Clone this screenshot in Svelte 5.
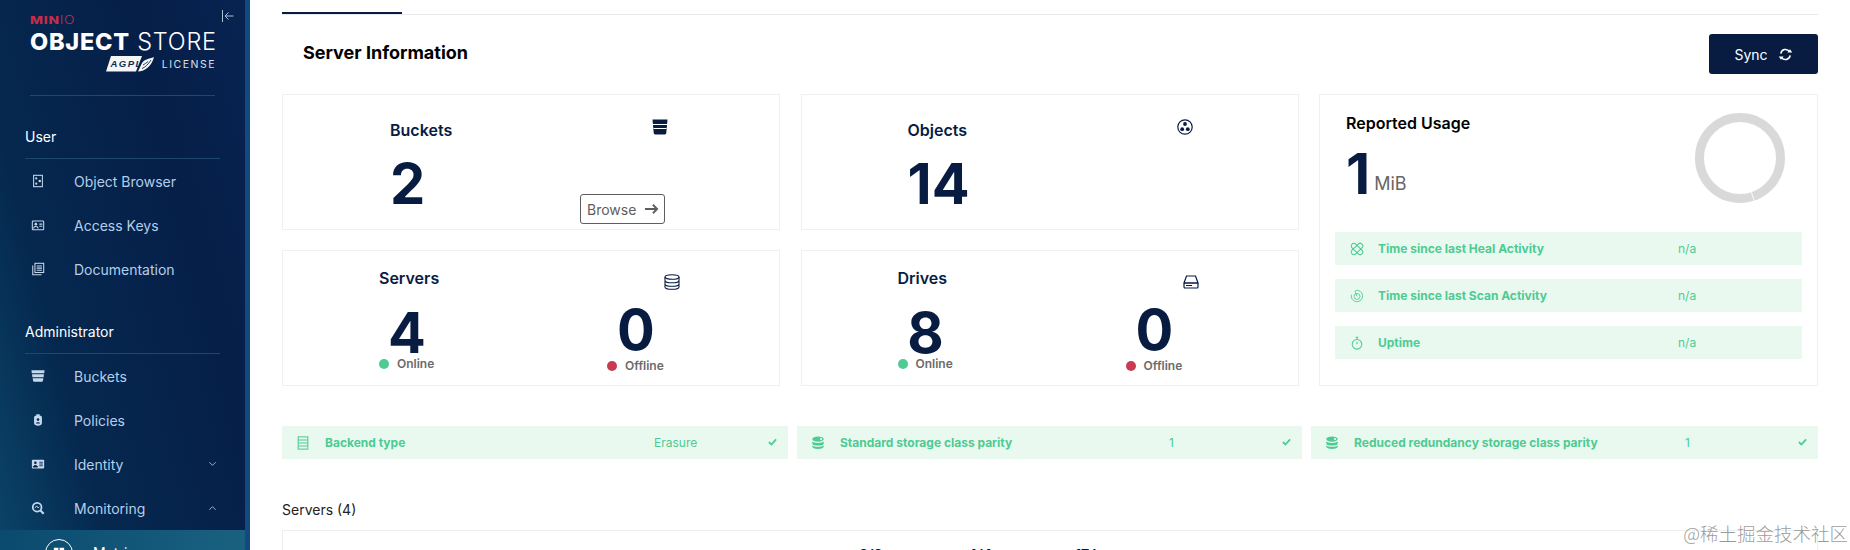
<script>
	const userLinks = [
		{ label: 'Object Browser', icon: 'browser' },
		{ label: 'Access Keys', icon: 'keys' },
		{ label: 'Documentation', icon: 'docs' }
	];
	const adminLinks = [
		{ label: 'Buckets', icon: 'bucket' },
		{ label: 'Policies', icon: 'policy' },
		{ label: 'Identity', icon: 'identity', caret: 'down' },
		{ label: 'Monitoring', icon: 'monitor', caret: 'up' }
	];
	const usageRows = [
		{ label: 'Time since last Heal Activity', icon: 'heal' },
		{ label: 'Time since last Scan Activity', icon: 'scan' },
		{ label: 'Uptime', icon: 'timer' }
	];
	const statusRows = [
		{ label: 'Backend type', value: 'Erasure', icon: 'rows', valueWidth: 372 },
		{ label: 'Standard storage class parity', value: '1', icon: 'db', valueWidth: 372 },
		{ label: 'Reduced redundancy storage class parity', value: '1', icon: 'db', valueWidth: 374 }
	];
</script>

{#snippet navIcon(name)}
	<svg class="nav-icon" viewBox="0 0 16 16" fill="none" stroke="currentColor" stroke-width="1.2">
		{#if name === 'browser'}
			<rect x="3" y="1.5" width="10" height="13" />
			<circle cx="6" cy="5" r="1.2" fill="currentColor" stroke="none" />
			<circle cx="10" cy="8" r="1.4" fill="currentColor" stroke="none" />
			<circle cx="6" cy="11" r="1.2" fill="currentColor" stroke="none" />
		{:else if name === 'keys'}
			<rect x="1.5" y="3.5" width="13" height="10" rx="1" />
			<circle cx="5.5" cy="7" r="1.5" fill="currentColor" stroke="none" />
			<path d="M3 12c0-3 5-3 5 0M9.5 7h3.5M9.5 9.5h3.5" />
		{:else if name === 'docs'}
			<path d="M2 4v10.5h10" />
			<rect x="4.5" y="1.5" width="10" height="10.5" />
			<path d="M6.5 4.5h6M6.5 7h6M6.5 9.5h6" />
		{:else if name === 'bucket'}
			<path d="M.5 1.500h15l-.4 3.300H.9zM1.200 6h13.600l-.4 3.300H1.600zM1.900 10.500h12.200l-.5 3c-.1.600-.5 1-1 1H3.400c-.5 0-.9-.4-1-1z" fill="currentColor" stroke="none" />
		{:else if name === 'policy'}
			<path d="M6 1.500h4v2H6z" fill="currentColor" stroke="none" />
			<path d="M3.500 5c0-1 1-1.800 2-1.800h5c1 0 2 .8 2 1.800v6.500c0 2-2 3-4.500 3s-4.500-1-4.500-3z" fill="currentColor" stroke="none" />
			<circle cx="8" cy="7.500" r="1.500" fill="#062650" stroke="none" />
			<path d="M5.500 12c.3-2 4.700-2 5 0z" fill="#062650" stroke="none" />
		{:else if name === 'identity'}
			<rect x="1" y="3" width="14" height="10" rx="1" fill="currentColor" stroke="none" />
			<circle cx="5" cy="6.500" r="1.500" fill="#062650" stroke="none" />
			<path d="M2.500 11.500c.3-2.500 4.700-2.500 5 0zM9.500 6h4M9.500 8h4M9.500 10h4" stroke="#062650" fill="#062650" stroke-width="1" />
		{:else}
			<circle cx="7" cy="7" r="5" stroke-width="2" />
			<path d="M10.500 10.500 14.500 14.500" stroke-width="2.400" />
			<path d="M4.500 8 6.500 5.500 8 8 9.500 6.500" stroke-width="1" />
		{/if}
	</svg>
{/snippet}

{#snippet greenIcon(name)}
	<svg class="green-icon" viewBox="0 0 16 16" fill="none" stroke="currentColor" stroke-width="1.2">
		{#if name === 'heal'}
			<rect x="0" y="5" width="16" height="6" rx="3" transform="rotate(45 8 8)" />
			<rect x="0" y="5" width="16" height="6" rx="3" transform="rotate(-45 8 8)" />
		{:else if name === 'scan'}
			<path d="M6 1.800a6.500 6.500 0 1 1-4.400 4.600" stroke-width="1" />
			<circle cx="8" cy="8.500" r="3.400" stroke-width="1" />
			<path d="M5.600 2.500 8 8.500" stroke-width="1" />
		{:else if name === 'timer'}
			<circle cx="8" cy="9.500" r="5.500" />
			<path d="M6.500 1.500h3M8 1.500v2.500M8 9.500V6.500" />
		{:else if name === 'rows'}
			<rect x="2.500" y="1" width="11" height="14" />
			<path d="M2.500 4.500h11M2.500 8h11M2.500 11.500h11" />
		{:else}
			<ellipse cx="8" cy="3.500" rx="6.500" ry="3" fill="currentColor" stroke="none" />
			<path d="M1.500 6c1 2.500 12 2.500 13 0v3c-1 2.500-12 2.500-13 0zM1.500 10.500c1 2.500 12 2.500 13 0v2c-1 3-12 3-13 0z" fill="currentColor" stroke="none" />
			<circle cx="11.500" cy="3.500" r="1.300" fill="#e9f8ee" stroke="none" />
		{/if}
	</svg>
{/snippet}

<div class="page">
	<aside class="sidebar">
		<div class="side-inner">
			<div class="logo">
				<svg class="collapse" viewBox="0 0 14 14" fill="none" stroke="currentColor" stroke-width="1">
					<path d="M1.500 1v12M12.500 7H4M7.500 3.500 4 7l3.500 3.500" />
				</svg>
				<div class="logo-minio"><b>MIN</b><span>IO</span></div>
				<div class="logo-name"><b>OBJECT</b> <span>STORE</span></div>
				<div class="logo-license">
					<svg class="agpl" viewBox="0 0 48 16">
						<path d="M5 0h31l-6 15.500H0z" fill="#f4f6f8" />
						<text x="4.500" y="10.500" class="agpl-text">AGPL</text>
						<path d="M32 15.500C38 15.500 45.500 11 48 1 43 3 38 3 35.500 8z" fill="#f4f6f8" />
						<path d="M36 12.500c3-1 6-4 9-8.500M37 9c2-1 3-2 5-3.500" stroke="#0a2a52" stroke-width=".9" fill="none" />
					</svg>
					<span>LICENSE</span>
				</div>
			</div>

			<nav class="nav">
				<div class="section user">
					<h3>User</h3>
					{#each userLinks as link}
						<a class="nav-link" href="#top">
							{@render navIcon(link.icon)}
							<span>{link.label}</span>
						</a>
					{/each}
				</div>
				<div class="section admin">
					<h3>Administrator</h3>
					{#each adminLinks as link}
						<a class="nav-link" href="#top">
							{@render navIcon(link.icon)}
							<span>{link.label}</span>
							{#if link.caret}
								<svg class="caret" class:up={link.caret === 'up'} viewBox="0 0 10 6" fill="none" stroke="currentColor" stroke-width="1">
									<path d="M1.500 1 5 4.500 8.500 1" />
								</svg>
							{/if}
						</a>
					{/each}
				</div>
			</nav>
		</div>
		<div class="sub-menu">
			<span class="sub-circle">
				<svg viewBox="0 0 14 14" fill="#fff"><path d="M1 1h5.300v5.300H1zM7.700 1H13v5.300H7.700zM1 7.700h5.300V13H1zM7.700 7.700H13V13H7.700z" /></svg>
			</span>
			<span class="sub-label">Metrics</span>
		</div>
	</aside>

	<main class="main">
		<div class="tabs"><span class="tab-active"></span></div>

		<header class="head">
			<h1>Server Information</h1>
			<button class="sync">
				Sync
				<svg viewBox="0 0 16 16" fill="none" stroke="currentColor" stroke-width="1.600">
					<path d="M3 7a5 5 0 0 1 9.200-2M13 9a5 5 0 0 1-9.200 2" />
					<path d="M10 5.800h5.200L12.800 2.500zM6 10.200H.8L3.200 13.500z" fill="currentColor" stroke="none" />
				</svg>
			</button>
		</header>

		<section class="tiles">
			<div class="tile tile-a">
				<div class="col col-left">
					<div class="tile-title">Buckets</div>
					<div class="big">2</div>
				</div>
				<div class="col col-right">
					<svg class="tile-icon" viewBox="0 0 16 16">
						<path d="M.5 .5h15l-1.200 13.200c-.1 1-.8 1.800-1.800 1.800h-9c-1 0-1.700-.8-1.800-1.800z" fill="#081c42" />
						<path d="M1 5.500h14M1.500 9.500h13" stroke="#fff" stroke-width="1.200" />
					</svg>
					<button class="browse">Browse
						<svg viewBox="0 0 16 12" fill="none" stroke="currentColor" stroke-width="2"><path d="M1 6h13M9.500 1.500 14 6l-4.500 4.500" /></svg>
					</button>
				</div>
			</div>

			<div class="tile tile-b">
				<div class="col col-left">
					<div class="tile-title">Objects</div>
					<div class="big">14</div>
				</div>
				<div class="col col-right">
					<svg class="tile-icon objects" viewBox="0 0 16 16" fill="#081c42">
						<circle cx="8" cy="8" r="7.200" fill="none" stroke="#081c42" stroke-width="1.200" />
						<circle cx="8" cy="5" r="1.900" />
						<circle cx="5.200" cy="10.200" r="1.900" />
						<circle cx="10.800" cy="10.200" r="1.900" />
					</svg>
				</div>
			</div>

			<div class="usage">
				<div class="usage-top">
					<div>
						<div class="usage-title">Reported Usage</div>
						<div class="usage-value"><span class="big">1</span><span class="unit">MiB</span></div>
					</div>
					<svg class="donut" viewBox="0 0 90 90" fill="none" stroke="#d9d9d9" stroke-width="9">
						<circle cx="45" cy="45" r="40.500" />
						<path d="M56.200 78.800 59.400 88.200" stroke="#fff" stroke-width="0.900" />
					</svg>
				</div>
				<div class="usage-rows">
					{#each usageRows as row}
						<div class="usage-row">
							{@render greenIcon(row.icon)}
							<span class="row-label">{row.label}</span>
							<span class="row-value">n/a</span>
						</div>
					{/each}
				</div>
			</div>

			<div class="tile split tile-c">
				<div class="split-col first">
					<div class="tile-title">Servers</div>
					<div class="big">4</div>
					<div class="state"><i class="dot on"></i>Online</div>
				</div>
				<div class="split-col second">
					<svg class="tile-icon" viewBox="0 0 16 16" fill="none" stroke="#081c42" stroke-width="1.100">
						<ellipse cx="8" cy="3" rx="7" ry="2.300" />
						<path d="M1 3v10c0 1.300 3 2.300 7 2.300s7-1 7-2.300V3M1 6.500c0 1.300 3 2.300 7 2.300s7-1 7-2.300M1 10c0 1.300 3 2.300 7 2.300s7-1 7-2.300" />
					</svg>
					<div class="big">0</div>
					<div class="state"><i class="dot off"></i>Offline</div>
				</div>
			</div>

			<div class="tile split tile-d">
				<div class="split-col first">
					<div class="tile-title">Drives</div>
					<div class="big">8</div>
					<div class="state"><i class="dot on"></i>Online</div>
				</div>
				<div class="split-col second">
					<svg class="tile-icon" viewBox="0 0 16 16" fill="none" stroke="#081c42" stroke-width="1.200">
						<path d="M3.500 2h9l2.500 7H1z" />
						<rect x="1" y="9" width="14" height="5" rx="1" />
						<path d="M3 11.500h6" stroke-width="1" />
					</svg>
					<div class="big">0</div>
					<div class="state"><i class="dot off"></i>Offline</div>
				</div>
			</div>
		</section>

		<section class="status">
			{#each statusRows as row}
				<div class="status-row" style="--value-x: {row.valueWidth}px">
					{@render greenIcon(row.icon)}
					<span class="row-label status-label">{row.label}</span>
					<span class="row-value status-value">{row.value}</span>
					<svg class="check" viewBox="0 0 10 8" fill="none" stroke="currentColor" stroke-width="2"><path d="M1 4l2.800 2.800L9 1" /></svg>
				</div>
			{/each}
		</section>

		<div class="servers-title">Servers (4)</div>
		<div class="servers-box">
			<b>8/8</b><b>4/4</b><b>17 h</b>
		</div>
	</main>

	<div class="watermark">@稀土掘金技术社区</div>
</div>

<style>
	:global(body) {
		margin: 0;
		background: #fff;
	}

	.page {
		position: relative;
		display: flex;
		width: 1850px;
		height: 550px;
		overflow: hidden;
		font-family: Inter, "Noto Sans", sans-serif;
		color: #081c42;
	}

	/* sidebar */
	.sidebar {
		flex: 0 0 250px;
		display: flex;
		flex-direction: column;
		box-sizing: border-box;
		border-right: 5px solid #124a7d;
		background: linear-gradient(75deg, #0b4468 0%, #05284f 28%, #061f49 70%, #072350 100%);
	}

	.side-inner {
		height: 530px;
		flex: none;
		overflow: hidden;
	}

	.logo {
		position: relative;
		box-sizing: border-box;
		height: 96px;
		margin: 0 30px;
		padding-top: 15px;
		border-bottom: 1px solid #1e4870;
		color: #fff;
	}

	.collapse {
		position: absolute;
		top: 9px;
		left: 191px;
		width: 14px;
		height: 14px;
		color: #a9c2da;
	}

	.logo-minio {
		font-size: 11px;
		line-height: 11px;
		letter-spacing: 0.6px;
		color: #c72c48;
		transform: scaleX(1.25);
		transform-origin: left;
	}

	.logo-minio b {
		font-weight: 800;
	}

	.logo-minio span {
		font-weight: 300;
	}

	.logo-name {
		margin-top: 2px;
		margin-right: -10px;
		font-size: 23.500px;
		line-height: 27px;
		white-space: nowrap;
		letter-spacing: 0.75px;
	}

	.logo-name b {
		font-weight: 800;
	}

	.logo-name span {
		font-weight: 300;
	}

	.logo-license {
		display: flex;
		justify-content: flex-end;
		align-items: center;
		gap: 8px;
		margin-top: 1px;
		margin-right: -1px;
		font-size: 10.500px;
		letter-spacing: 1.500px;
		color: #d7e2ec;
	}

	.agpl {
		width: 48px;
		height: 16px;
	}

	.agpl-text {
		font-family: "Liberation Sans", sans-serif;
		font-size: 9.500px;
		font-style: italic;
		font-weight: 700;
		fill: #0a2a52;
	}

	.nav {
		padding: 0 25px;
	}

	.section h3 {
		margin: 0;
		height: 21px;
		padding-bottom: 11px;
		border-bottom: 1px solid #1e4870;
		font-size: 14px;
		font-weight: 400;
		line-height: 21px;
		color: #fff;
	}

	.user,
	.admin {
		padding-top: 30px;
	}

	.nav-link {
		display: flex;
		align-items: center;
		height: 44px;
		padding-left: 6px;
		font-size: 14px;
		color: #b3cfe9;
		text-decoration: none;
	}

	.nav-icon {
		flex: none;
		width: 14px;
		height: 14px;
		margin-right: 29px;
		color: #c5d9ec;
	}

	.caret {
		width: 9px;
		height: 6px;
		margin-left: auto;
		margin-right: 3px;
		color: #a9c2da;
	}

	.caret.up {
		transform: rotate(180deg);
	}

	.sub-menu {
		display: flex;
		align-items: flex-start;
		flex: 1;
		padding: 9px 0 0 45px;
		gap: 20px;
		background: linear-gradient(90deg, #0a4a6e, #1a6180);
		color: #fff;
	}

	.sub-circle {
		display: flex;
		align-items: center;
		justify-content: center;
		flex: none;
		box-sizing: border-box;
		width: 28px;
		height: 28px;
		border: 1px solid #fff;
		border-radius: 50%;
	}

	.sub-circle svg {
		width: 12px;
		height: 12px;
	}

	.sub-label {
		font-size: 14px;
		line-height: 18px;
		margin-top: 5px;
	}

	/* main */
	.main {
		flex: 1;
		min-width: 0;
		padding: 0 32px;
	}

	.tabs {
		height: 14px;
		border-bottom: 1px solid #e7e9ec;
	}

	.tab-active {
		display: block;
		width: 120px;
		height: 14px;
		box-sizing: border-box;
		border-bottom: 2px solid #081c42;
	}

	.head {
		display: flex;
		align-items: center;
		justify-content: space-between;
		height: 60px;
		padding: 5px 0 0 21px;
		box-sizing: border-box;
		margin-bottom: 19px;
	}

	.head h1 {
		margin: 9px 0 0;
		font-size: 18px;
		font-weight: 700;
		color: #000;
	}

	.sync {
		display: flex;
		align-items: center;
		justify-content: center;
		gap: 10px;
		width: 109px;
		height: 40px;
		margin-top: 13px;
		border: 0;
		border-radius: 3px;
		background: #081c42;
		color: #fff;
		font: 400 14px Inter, sans-serif;
	}

	.sync svg {
		width: 15px;
		height: 15px;
	}

	.tiles {
		display: grid;
		grid-template-columns: 498px 498px 499px;
		grid-template-rows: 136px 136px;
		gap: 20px 20.500px;
	}

	.tile,
	.usage {
		box-sizing: border-box;
		border: 1px solid #f0f0f0;
		position: relative;
	}

	.tile-a,
	.tile-b {
		display: flex;
	}

	.col-left {
		padding-top: 24px;
		width: 369px;
		box-sizing: border-box;
	}

	.tile-a .col-left {
		padding-left: 107px;
	}

	.tile-b .col-left {
		padding-left: 106px;
	}

	.col-right {
		display: flex;
		flex-direction: column;
		flex: 1;
		padding-top: 24px;
	}

	.tile-title {
		font-size: 16px;
		font-weight: 600;
		line-height: 22px;
	}

	.big {
		font-size: 56px;
		font-weight: 700;
		line-height: 44px;
	}

	.col-left .big {
		margin-top: 21px;
	}

	.tile-icon {
		display: block;
		width: 16px;
		height: 16px;
	}

	.tile-icon.objects {
		margin-left: 6px;
	}

	.browse {
		display: flex;
		align-items: center;
		gap: 8px;
		box-sizing: border-box;
		width: 85px;
		height: 30px;
		margin: 59px 0 0 -72px;
		padding: 0 0 0 6px;
		border: 1px solid #5e5e5e;
		border-radius: 3px;
		background: #fff;
		color: #5e5e5e;
		font: 400 14px Inter, sans-serif;
		white-space: nowrap;
	}

	.browse svg {
		width: 15px;
		height: 12px;
	}

	.split {
		display: flex;
	}

	.split-col {
		position: relative;
		padding-top: 16px;
	}

	.first {
		width: 324px;
		box-sizing: border-box;
		padding-left: 96px;
	}

	.second {
		flex: 1;
	}

	.split .big {
		text-align: center;
		width: 52px;
	}

	.first .big {
		margin-top: 22px;
		margin-left: 2px;
	}

	.second .big {
		margin-top: 41px;
		margin-left: 3px;
	}

	.second .tile-icon {
		position: absolute;
		top: 23px;
		left: 57px;
	}

	.state {
		display: flex;
		align-items: center;
		font-size: 12px;
		font-weight: 600;
		color: #6b6b6b;
		line-height: 14px;
		margin-top: 2px;
	}

	.second .state {
		margin-top: 7px;
	}

	.dot {
		width: 10px;
		height: 10px;
		border-radius: 50%;
		margin-right: 8px;
	}

	.dot.on {
		background: #4ccb92;
	}

	.dot.off {
		background: #c83b51;
	}

	.usage {
		grid-row: 1 / span 2;
		grid-column: 3;
		padding: 0 15px;
	}

	.usage-top {
		display: flex;
		justify-content: space-between;
		height: 137px;
		padding: 0 17px 0 11px;
	}

	.usage-title {
		margin-top: 17px;
		font-size: 16px;
		font-weight: 600;
		line-height: 22px;
		color: #000;
	}

	.usage-value {
		display: flex;
		align-items: flex-end;
		margin-top: 18px;
	}

	.unit {
		margin: 0 0 2px 4px;
		font-size: 18px;
		line-height: 20px;
		color: #666;
	}

	.donut {
		width: 90px;
		height: 90px;
		margin-top: 18px;
	}

	.usage-rows {
		display: flex;
		flex-direction: column;
		gap: 14px;
	}

	.usage-row,
	.status-row {
		display: flex;
		align-items: center;
		height: 33px;
		background: #eaf9ef;
		color: #4ccb92;
		font-size: 12px;
	}

	.usage-row {
		padding-left: 15px;
	}

	.green-icon {
		flex: none;
		width: 14px;
		height: 14px;
		margin-right: 14px;
	}

	.row-label {
		font-weight: 700;
		white-space: nowrap;
		width: 300px;
	}

	.row-value {
		font-weight: 400;
	}

	.status {
		display: grid;
		grid-template-columns: 506px 505px 507px;
		gap: 9px;
		margin-top: 40px;
	}

	.status-row {
		position: relative;
		padding-left: 14px;
	}

	.status-row .green-icon {
		margin-right: 15px;
	}

	.status-label {
		width: auto;
	}

	.status-value {
		position: absolute;
		left: var(--value-x);
	}

	.check {
		position: absolute;
		right: 11px;
		top: 12px;
		width: 9px;
		height: 8px;
	}

	.servers-title {
		margin-top: 41px;
		font-size: 14px;
		line-height: 20px;
		color: #222;
	}

	.servers-box {
		display: flex;
		height: 60px;
		margin-top: 10px;
		padding: 16px 0 0 576px;
		border: 1px solid #eee;
		font-size: 14px;
		line-height: 16px;
	}

	.servers-box b:nth-child(2) {
		margin-left: 85px;
	}

	.servers-box b:nth-child(3) {
		margin-left: 83px;
	}

	.watermark {
		position: absolute;
		right: 2px;
		top: 522px;
		font-family: "Noto Sans CJK SC", sans-serif;
		font-size: 18.500px;
		font-weight: 300;
		line-height: 22px;
		color: rgba(120, 120, 120, 0.75);
		white-space: nowrap;
	}
</style>
